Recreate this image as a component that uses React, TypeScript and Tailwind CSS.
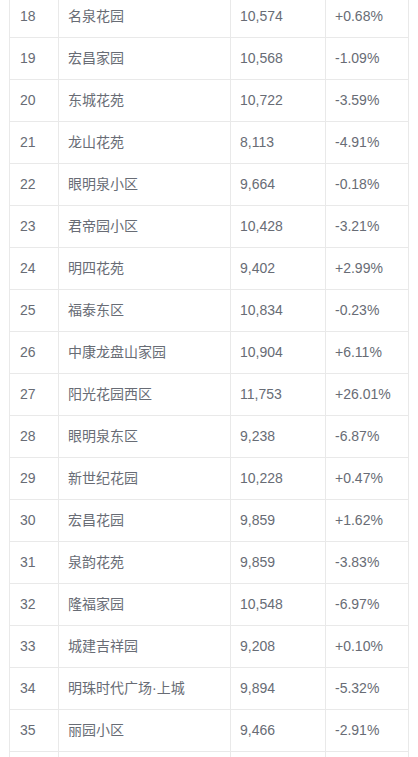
import React from "react";

const rows: [string, string, string, string][] = [
  ["18", "名泉花园", "10,574", "+0.68%"],
  ["19", "宏昌家园", "10,568", "-1.09%"],
  ["20", "东城花苑", "10,722", "-3.59%"],
  ["21", "龙山花苑", "8,113", "-4.91%"],
  ["22", "眼明泉小区", "9,664", "-0.18%"],
  ["23", "君帝园小区", "10,428", "-3.21%"],
  ["24", "明四花苑", "9,402", "+2.99%"],
  ["25", "福泰东区", "10,834", "-0.23%"],
  ["26", "中康龙盘山家园", "10,904", "+6.11%"],
  ["27", "阳光花园西区", "11,753", "+26.01%"],
  ["28", "眼明泉东区", "9,238", "-6.87%"],
  ["29", "新世纪花园", "10,228", "+0.47%"],
  ["30", "宏昌花园", "9,859", "+1.62%"],
  ["31", "泉韵花苑", "9,859", "-3.83%"],
  ["32", "隆福家园", "10,548", "-6.97%"],
  ["33", "城建吉祥园", "9,208", "+0.10%"],
  ["34", "明珠时代广场·上城", "9,894", "-5.32%"],
  ["35", "丽园小区", "9,466", "-2.91%"],
  ["", "", "", ""],
];

export default function App() {
  return (
    <div className="w-[418px] h-[757px] overflow-hidden bg-white">
      <div className="pl-[9px] mt-[-5px]">
        <table
          className="border-collapse text-[14px] text-[#686c75] w-[399px] table-fixed"
          style={{ fontFamily: '"Liberation Sans", Arial, "Noto Sans CJK SC", sans-serif' }}
        >
          <colgroup>
            <col className="w-[49px]" />
            <col className="w-[172px]" />
            <col className="w-[95px]" />
            <col className="w-[83px]" />
          </colgroup>
          <tbody>
            {rows.map((r, i) => (
              <tr key={i} className="h-[42px]">
                <td className="border border-[#e9e9e9] pl-[10px] pr-1 align-middle">{r[0]}</td>
                <td className="border border-[#e9e9e9] pl-[9px] pr-1 align-middle whitespace-nowrap">{r[1]}</td>
                <td className="border border-[#e9e9e9] pl-[9px] pr-1 align-middle">{r[2]}</td>
                <td className="border border-[#e9e9e9] pl-[9px] pr-1 align-middle whitespace-nowrap">{r[3]}</td>
              </tr>
            ))}
          </tbody>
        </table>
      </div>
    </div>
  );
}
